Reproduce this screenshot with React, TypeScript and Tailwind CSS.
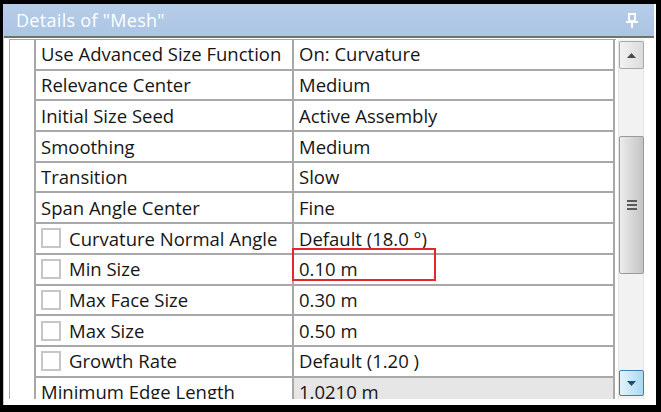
import { FC } from 'react';

interface Row {
    name: string;
    value: string;
    check?: boolean;
    shaded?: boolean;
}

const rows: Row[] = [
    { name: 'Use Advanced Size Function', value: 'On: Curvature' },
    { name: 'Relevance Center', value: 'Medium' },
    { name: 'Initial Size Seed', value: 'Active Assembly' },
    { name: 'Smoothing', value: 'Medium' },
    { name: 'Transition', value: 'Slow' },
    { name: 'Span Angle Center', value: 'Fine' },
    { name: 'Curvature Normal Angle', value: 'Default (18.0 °)', check: true },
    { name: 'Min Size', value: '0.10 m', check: true },
    { name: 'Max Face Size', value: '0.30 m', check: true },
    { name: 'Max Size', value: '0.50 m', check: true },
    { name: 'Growth Rate', value: 'Default (1.20 )', check: true },
    { name: 'Minimum Edge Length', value: '1.0210 m', shaded: true },
];

const PinIcon: FC = () => (
    <svg width="12" height="15" viewBox="0 0 12 15" fill="none">
        <rect x="3" y="1" width="6" height="7" stroke="white" strokeWidth="2" />
        <line x1="0" y1="9" x2="12" y2="9" stroke="white" strokeWidth="2" />
        <line x1="6" y1="9" x2="6" y2="15" stroke="white" strokeWidth="2" />
    </svg>
);

const ScrollBar: FC = () => (
    <div className="relative w-[26px] h-full bg-[#f2f2f2] border-x border-[#e4e4e4]">
        {/* up button */}
        <div className="absolute left-0 top-[2px] w-[25px] h-[28px] rounded-[2px] border border-[#a8a8a8] bg-gradient-to-r from-[#f2f2f2] to-[#dcdcdc] flex items-center justify-center">
            <svg width="9" height="5" viewBox="0 0 9 5">
                <path d="M0 5 L4.5 0 L9 5 Z" fill="#4a4a4a" />
            </svg>
        </div>
        {/* thumb */}
        <div className="absolute left-0 top-[97px] w-[25px] h-[138px] rounded-[2px] border border-[#9a9a9a] bg-gradient-to-r from-[#ececec] via-[#d8d8d8] to-[#c4c4c4] flex items-center justify-center">
            <div className="flex flex-col gap-[2px]">
                <div className="w-[10px] h-[2px] bg-[#5a5a5a]" />
                <div className="w-[10px] h-[2px] bg-[#5a5a5a]" />
                <div className="w-[10px] h-[2px] bg-[#5a5a5a]" />
            </div>
        </div>
        {/* down button */}
        <div className="absolute left-0 top-[331px] w-[25px] h-[26px] rounded-[2px] border border-[#3c7fb1] bg-gradient-to-r from-[#e3f4fc] to-[#a9d9f2] flex items-center justify-center">
            <svg width="9" height="5" viewBox="0 0 9 5">
                <path d="M0 0 L9 0 L4.5 5 Z" fill="#1c4e72" />
            </svg>
        </div>
    </div>
);

const App: FC = () => {
    return (
        <div
            className="w-[661px] h-[412px] bg-black pt-[4px] pl-[3px] pr-[5px] pb-[7px] overflow-hidden"
            style={{ fontFamily: '"Open Sans", "Liberation Sans", sans-serif' }}
        >
            <div className="w-full h-full bg-white flex flex-col border-l border-[#c8c8c8]">
                <header className="h-[32px] shrink-0 bg-gradient-to-b from-[#b6cde8] to-[#abc5e3] flex items-center justify-between pl-[12px] pr-[16px] mr-[2px]">
                    <span className="text-white text-[18px] tracking-[0.3px]">Details of "Mesh"</span>
                    <PinIcon />
                </header>
                <div className="h-[2px] shrink-0 bg-[#707070] mr-[2px]" />

                <div className="flex flex-1 min-h-0 pl-[5px] pt-[1px]">
                    <div className="relative w-[607px] h-[360px] overflow-hidden border-l border-t border-[#a8a8a8]">
                        <div className="flex flex-col">
                            {rows.map((row) => (
                                <div key={row.name} className="flex h-[30.7px] shrink-0">
                                    <div className="w-[24px] shrink-0 bg-white" />
                                    <div className="w-[258px] shrink-0 border-l-2 border-b-2 border-[#a8a8a8] bg-white flex items-center pl-[5px] text-[18.5px] text-[#161616] whitespace-nowrap overflow-hidden">
                                        {row.check && (
                                            <span className="w-[20px] h-[20px] border-2 border-[#c6c6c6] mr-[8px] shrink-0" />
                                        )}
                                        <span>{row.name}</span>
                                    </div>
                                    <div
                                        className={`w-[323px] shrink-0 border-l-2 border-r-2 border-b-2 border-[#a8a8a8] flex items-center pl-[5px] text-[18.5px] text-[#161616] whitespace-nowrap ${
                                            row.shaded ? 'bg-[#e6e6e6]' : 'bg-white'
                                        }`}
                                    >
                                        {row.value}
                                    </div>
                                </div>
                            ))}
                        </div>
                        {/* highlight annotation */}
                        <div className="absolute left-[282px] top-[208px] w-[144px] h-[33px] border-2 border-[#e0282d]" />
                    </div>
                    <div className="ml-[2px] h-[360px]">
                        <ScrollBar />
                    </div>
                </div>
            </div>
        </div>
    );
};

export default App;
